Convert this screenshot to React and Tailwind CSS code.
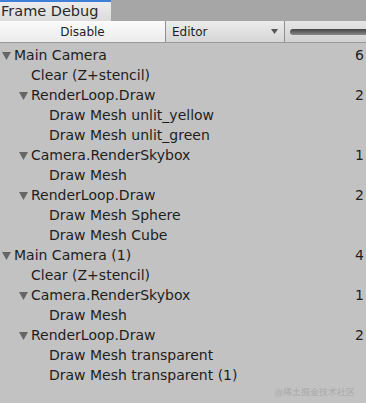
import React from "react";

// tree rows of the frame debugger: depth, label, count, expandable
const rows = [
  { d: 0, label: "Main Camera", count: 6, open: true },
  { d: 1, label: "Clear (Z+stencil)" },
  { d: 1, label: "RenderLoop.Draw", count: 2, open: true },
  { d: 2, label: "Draw Mesh unlit_yellow" },
  { d: 2, label: "Draw Mesh unlit_green" },
  { d: 1, label: "Camera.RenderSkybox", count: 1, open: true },
  { d: 2, label: "Draw Mesh" },
  { d: 1, label: "RenderLoop.Draw", count: 2, open: true },
  { d: 2, label: "Draw Mesh Sphere" },
  { d: 2, label: "Draw Mesh Cube" },
  { d: 0, label: "Main Camera (1)", count: 4, open: true },
  { d: 1, label: "Clear (Z+stencil)" },
  { d: 1, label: "Camera.RenderSkybox", count: 1, open: true },
  { d: 2, label: "Draw Mesh" },
  { d: 1, label: "RenderLoop.Draw", count: 2, open: true },
  { d: 2, label: "Draw Mesh transparent" },
  { d: 2, label: "Draw Mesh transparent (1)" },
];

const indent = ["pl-[2px]", "pl-[19px]", "pl-[37px]"];

function Row({ d, label, count, open }) {
  return (
    <div className={`flex items-center h-5 pr-[2px] ${indent[d]}`}>
      <span className="w-3 flex items-center">
        {open && (
          <svg width="9" height="9" viewBox="0 0 9 9">
            <path d="M0 1 L9 1 L4.5 9 Z" fill="#666" />
          </svg>
        )}
      </span>
      <span className="flex-1">{label}</span>
      {count !== undefined && <span>{count}</span>}
    </div>
  );
}

export default function App() {
  return (
    <div
      className="w-[366px] h-[403px] bg-[#c2c2c2] overflow-hidden text-[#1e1e1e] text-[14px]"
      style={{ fontFamily: '"DejaVu Sans", sans-serif' }}
    >
      {/* tab strip */}
      <div className="flex h-[21px] bg-[#a6a6a6]">
        <div className="w-[111px] border-t-2 border-[#3f7fd8] bg-gradient-to-b from-[#ececec] to-[#dcdcdc] pl-[1px] text-[14.5px] leading-[18px] text-[#2a2a2a]">
          Frame Debug
        </div>
      </div>

      {/* toolbar */}
      <div className="flex h-[22px] bg-[#c9c9c9] border-b border-[#9a9a9a] text-[12px]">
        <div className="w-[166px] flex items-center justify-center bg-gradient-to-b from-[#fbfbfb] to-[#ebebeb] border-r border-[#8f8f8f]">
          Disable
        </div>
        <div className="w-[119px] flex items-center justify-between pl-[6px] pr-[6px] bg-gradient-to-b from-[#ececec] to-[#d6d6d6] border-r border-[#8f8f8f]">
          <span>Editor</span>
          <svg width="7" height="5" viewBox="0 0 7 5">
            <path d="M0 0 L7 0 L3.5 5 Z" fill="#555" />
          </svg>
        </div>
        <div className="flex-1 flex items-center pl-[5px] bg-gradient-to-b from-[#e6e6e6] to-[#d2d2d2]">
          <div className="w-full h-[6px] rounded-l-full bg-gradient-to-b from-[#444] to-[#8a8a8a]" />
        </div>
      </div>

      {/* event tree */}
      <div className="pt-[2px]">
        {rows.map((r, i) => (
          <Row key={i} {...r} />
        ))}
      </div>

      <div className="flex justify-end pr-[11px] pt-[1px] text-[8.5px] text-[#a9a9a9]">
        @稀土掘金技术社区
      </div>
    </div>
  );
}
